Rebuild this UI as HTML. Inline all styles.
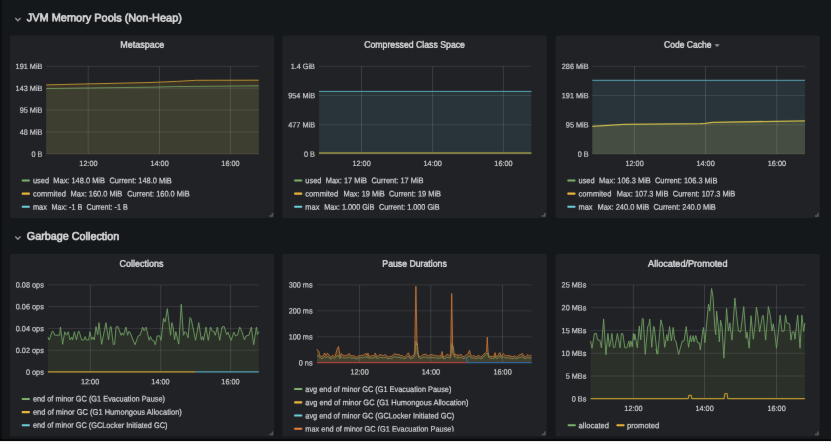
<!DOCTYPE html>
<html lang="en"><head><meta charset="utf-8"><title>JVM dashboard</title>
<style>
html,body{margin:0;padding:0;background:#15181a;width:831px;height:442px;overflow:hidden}
svg{display:block;position:absolute;left:-4px;top:-4px;filter:url(#soft)}
text{font-family:"Liberation Sans",Arial,sans-serif;white-space:pre}
</style></head><body>
<svg width="839" height="450" viewBox="-4 -4 839 450" font-family="'Liberation Sans', Arial, sans-serif">
<defs><filter id="soft" x="0" y="0" width="1" height="1" color-interpolation-filters="sRGB"><feConvolveMatrix order="3" kernelMatrix="0.00163 0.03713 0.00163 0.03713 0.84497 0.03713 0.00163 0.03713 0.00163" divisor="1" edgeMode="duplicate" preserveAlpha="true"/></filter><linearGradient id="lg" x1="0" x2="1" y1="0" y2="0"><stop offset="0" stop-color="#0c0d0e"/><stop offset="0.6" stop-color="#101113"/><stop offset="1" stop-color="#15181a"/></linearGradient></defs>
<rect x="-4" y="-4" width="839" height="450" fill="#15181a"/>
<rect x="-4" y="-4" width="4.1" height="450" fill="#0c0d0e"/>
<rect x="0" y="-4" width="3.2" height="450" fill="url(#lg)"/>
<polyline points="15.3,18.00 17.9,20.70 20.5,18.00" fill="none" stroke="#97989a" stroke-width="1.3"/>
<text transform="translate(26.80,21.35) rotate(0.03) scale(0.9873,1)" font-size="11.1" text-anchor="start" fill="#d8d9da" font-weight="400" stroke="#d8d9da" stroke-width="0.65">JVM Memory Pools (Non-Heap)</text>
<polyline points="15.3,236.50 17.9,239.20 20.5,236.50" fill="none" stroke="#97989a" stroke-width="1.3"/>
<text transform="translate(26.80,239.85) rotate(0.03) scale(0.9745,1)" font-size="11.1" text-anchor="start" fill="#d8d9da" font-weight="400" stroke="#d8d9da" stroke-width="0.65">Garbage Collection</text>
<rect x="10.00" y="35.60" width="264.3" height="182.5" rx="1.6" fill="#212226"/>
<path d="M269.40,216.10 H272.40 V213.10" fill="none" stroke="#5a5b5f" stroke-width="1.5"/>
<text transform="translate(142.15,47.70) rotate(0.03) scale(0.9468,1)" font-size="9.5" text-anchor="middle" fill="#d8d9da" font-weight="400" stroke="#d8d9da" stroke-width="0.45">Metaspace</text>
<polygon points="46.20,84.90 88.00,83.90 150.00,82.50 176.50,81.40 196.30,80.30 258.80,80.20 258.80,154.00 46.20,154.00" fill="#3a3426" opacity="1.0"/>
<polygon points="46.20,88.60 110.00,87.70 150.00,87.20 173.80,86.60 258.80,85.80 258.80,154.00 46.20,154.00" fill="#3d3e2f" opacity="1.0"/>
<line x1="46.20" x2="258.80" y1="66.30" y2="66.30" stroke="#fff" stroke-opacity="0.125" stroke-width="0.8"/>
<line x1="46.20" x2="258.80" y1="88.22" y2="88.22" stroke="#fff" stroke-opacity="0.125" stroke-width="0.8"/>
<line x1="46.20" x2="258.80" y1="110.15" y2="110.15" stroke="#fff" stroke-opacity="0.125" stroke-width="0.8"/>
<line x1="46.20" x2="258.80" y1="132.07" y2="132.07" stroke="#fff" stroke-opacity="0.125" stroke-width="0.8"/>
<line x1="46.20" x2="258.80" y1="154.00" y2="154.00" stroke="#fff" stroke-opacity="0.125" stroke-width="0.8"/>
<line x1="88.20" x2="88.20" y1="66.30" y2="154.00" stroke="#fff" stroke-opacity="0.155" stroke-width="0.8"/>
<line x1="159.50" x2="159.50" y1="66.30" y2="154.00" stroke="#fff" stroke-opacity="0.155" stroke-width="0.8"/>
<line x1="230.40" x2="230.40" y1="66.30" y2="154.00" stroke="#fff" stroke-opacity="0.155" stroke-width="0.8"/>
<polyline points="46.20,84.90 88.00,83.90 150.00,82.50 176.50,81.40 196.30,80.30 258.80,80.20" fill="none" stroke="#c69a31" stroke-width="0.9" stroke-linejoin="round" stroke-linecap="butt" opacity="1.0"/>
<polyline points="46.20,88.60 110.00,87.70 150.00,87.20 173.80,86.60 258.80,85.80" fill="none" stroke="#739961" stroke-width="0.9" stroke-linejoin="round" stroke-linecap="butt" opacity="1.0"/>
<text transform="translate(42.40,69.00) rotate(0.03) scale(0.95,1)" font-size="7.7" text-anchor="end" fill="#d2d3d4" font-weight="400" stroke="#d2d3d4" stroke-width="0.18">191 MiB</text>
<text transform="translate(42.40,90.92) rotate(0.03) scale(0.95,1)" font-size="7.7" text-anchor="end" fill="#d2d3d4" font-weight="400" stroke="#d2d3d4" stroke-width="0.18">143 MiB</text>
<text transform="translate(42.40,112.85) rotate(0.03) scale(0.95,1)" font-size="7.7" text-anchor="end" fill="#d2d3d4" font-weight="400" stroke="#d2d3d4" stroke-width="0.18">95 MiB</text>
<text transform="translate(42.40,134.77) rotate(0.03) scale(0.95,1)" font-size="7.7" text-anchor="end" fill="#d2d3d4" font-weight="400" stroke="#d2d3d4" stroke-width="0.18">48 MiB</text>
<text transform="translate(42.40,156.70) rotate(0.03) scale(0.95,1)" font-size="7.7" text-anchor="end" fill="#d2d3d4" font-weight="400" stroke="#d2d3d4" stroke-width="0.18">0 B</text>
<text transform="translate(88.50,166.00) rotate(0.03) scale(0.95,1)" font-size="7.7" text-anchor="middle" fill="#d2d3d4" font-weight="400" stroke="#d2d3d4" stroke-width="0.18">12:00</text>
<text transform="translate(159.60,166.00) rotate(0.03) scale(0.95,1)" font-size="7.7" text-anchor="middle" fill="#d2d3d4" font-weight="400" stroke="#d2d3d4" stroke-width="0.18">14:00</text>
<text transform="translate(230.50,166.00) rotate(0.03) scale(0.95,1)" font-size="7.7" text-anchor="middle" fill="#d2d3d4" font-weight="400" stroke="#d2d3d4" stroke-width="0.18">16:00</text>
<rect x="21.70" y="179.40" width="8.2" height="2.1" rx="0.7" fill="#7eb26d"/>
<text transform="translate(32.90,183.35) rotate(0.03) scale(0.92,1)" font-size="8.1" text-anchor="start" fill="#d3d4d6" font-weight="400" stroke="#d3d4d6" stroke-width="0.22">used</text>
<text transform="translate(53.30,183.35) rotate(0.03) scale(0.92,1)" font-size="8.1" text-anchor="start" fill="#d3d4d6" font-weight="400" stroke="#d3d4d6" stroke-width="0.22">Max: 148.0 MiB</text>
<text transform="translate(109.40,183.35) rotate(0.03) scale(0.92,1)" font-size="8.1" text-anchor="start" fill="#d3d4d6" font-weight="400" stroke="#d3d4d6" stroke-width="0.22">Current: 148.0 MiB</text>
<rect x="21.70" y="192.60" width="8.2" height="2.1" rx="0.7" fill="#eab839"/>
<text transform="translate(32.90,196.55) rotate(0.03) scale(0.9399,1)" font-size="8.1" text-anchor="start" fill="#d3d4d6" font-weight="400" stroke="#d3d4d6" stroke-width="0.22">commited</text>
<text transform="translate(70.60,196.55) rotate(0.03) scale(0.92,1)" font-size="8.1" text-anchor="start" fill="#d3d4d6" font-weight="400" stroke="#d3d4d6" stroke-width="0.22">Max: 160.0 MiB</text>
<text transform="translate(127.20,196.55) rotate(0.03) scale(0.92,1)" font-size="8.1" text-anchor="start" fill="#d3d4d6" font-weight="400" stroke="#d3d4d6" stroke-width="0.22">Current: 160.0 MiB</text>
<rect x="21.70" y="205.70" width="8.2" height="2.1" rx="0.7" fill="#6ed0e0"/>
<text transform="translate(32.90,209.65) rotate(0.03) scale(0.92,1)" font-size="8.1" text-anchor="start" fill="#d3d4d6" font-weight="400" stroke="#d3d4d6" stroke-width="0.22">max</text>
<text transform="translate(51.40,209.65) rotate(0.03) scale(0.89,1)" font-size="8.1" text-anchor="start" fill="#d3d4d6" font-weight="400" stroke="#d3d4d6" stroke-width="0.22">Max: -1 B</text>
<text transform="translate(86.50,209.65) rotate(0.03) scale(0.89,1)" font-size="8.1" text-anchor="start" fill="#d3d4d6" font-weight="400" stroke="#d3d4d6" stroke-width="0.22">Current: -1 B</text>
<rect x="282.40" y="35.60" width="264.3" height="182.5" rx="1.6" fill="#212226"/>
<path d="M541.80,216.10 H544.80 V213.10" fill="none" stroke="#5a5b5f" stroke-width="1.5"/>
<text transform="translate(414.55,47.70) rotate(0.03) scale(0.9196,1)" font-size="9.5" text-anchor="middle" fill="#d8d9da" font-weight="400" stroke="#d8d9da" stroke-width="0.45">Compressed Class Space</text>
<polygon points="319.00,91.40 531.40,91.40 531.40,154.00 319.00,154.00" fill="#28343a" opacity="1.0"/>
<line x1="319.00" x2="531.40" y1="66.30" y2="66.30" stroke="#fff" stroke-opacity="0.125" stroke-width="0.8"/>
<line x1="319.00" x2="531.40" y1="95.53" y2="95.53" stroke="#fff" stroke-opacity="0.125" stroke-width="0.8"/>
<line x1="319.00" x2="531.40" y1="124.77" y2="124.77" stroke="#fff" stroke-opacity="0.125" stroke-width="0.8"/>
<line x1="319.00" x2="531.40" y1="154.00" y2="154.00" stroke="#fff" stroke-opacity="0.125" stroke-width="0.8"/>
<line x1="361.50" x2="361.50" y1="66.30" y2="154.00" stroke="#fff" stroke-opacity="0.155" stroke-width="0.8"/>
<line x1="432.60" x2="432.60" y1="66.30" y2="154.00" stroke="#fff" stroke-opacity="0.155" stroke-width="0.8"/>
<line x1="503.40" x2="503.40" y1="66.30" y2="154.00" stroke="#fff" stroke-opacity="0.155" stroke-width="0.8"/>
<polyline points="319.00,91.40 531.40,91.40" fill="none" stroke="#58a8b7" stroke-width="1.0" stroke-linejoin="round" stroke-linecap="butt" opacity="1.0"/>
<polyline points="319.00,153.00 531.40,153.00" fill="none" stroke="#9c9345" stroke-width="1.4" stroke-linejoin="round" stroke-linecap="butt" opacity="1.0"/>
<text transform="translate(315.00,69.00) rotate(0.03) scale(0.95,1)" font-size="7.7" text-anchor="end" fill="#d2d3d4" font-weight="400" stroke="#d2d3d4" stroke-width="0.18">1.4 GiB</text>
<text transform="translate(315.00,98.23) rotate(0.03) scale(0.95,1)" font-size="7.7" text-anchor="end" fill="#d2d3d4" font-weight="400" stroke="#d2d3d4" stroke-width="0.18">954 MiB</text>
<text transform="translate(315.00,127.47) rotate(0.03) scale(0.95,1)" font-size="7.7" text-anchor="end" fill="#d2d3d4" font-weight="400" stroke="#d2d3d4" stroke-width="0.18">477 MiB</text>
<text transform="translate(315.00,156.70) rotate(0.03) scale(0.95,1)" font-size="7.7" text-anchor="end" fill="#d2d3d4" font-weight="400" stroke="#d2d3d4" stroke-width="0.18">0 B</text>
<text transform="translate(361.60,166.00) rotate(0.03) scale(0.95,1)" font-size="7.7" text-anchor="middle" fill="#d2d3d4" font-weight="400" stroke="#d2d3d4" stroke-width="0.18">12:00</text>
<text transform="translate(432.70,166.00) rotate(0.03) scale(0.95,1)" font-size="7.7" text-anchor="middle" fill="#d2d3d4" font-weight="400" stroke="#d2d3d4" stroke-width="0.18">14:00</text>
<text transform="translate(503.50,166.00) rotate(0.03) scale(0.95,1)" font-size="7.7" text-anchor="middle" fill="#d2d3d4" font-weight="400" stroke="#d2d3d4" stroke-width="0.18">16:00</text>
<rect x="294.10" y="179.40" width="8.2" height="2.1" rx="0.7" fill="#7eb26d"/>
<text transform="translate(305.30,183.35) rotate(0.03) scale(0.92,1)" font-size="8.1" text-anchor="start" fill="#d3d4d6" font-weight="400" stroke="#d3d4d6" stroke-width="0.22">used</text>
<text transform="translate(325.70,183.35) rotate(0.03) scale(0.92,1)" font-size="8.1" text-anchor="start" fill="#d3d4d6" font-weight="400" stroke="#d3d4d6" stroke-width="0.22">Max: 17 MiB</text>
<text transform="translate(371.50,183.35) rotate(0.03) scale(0.92,1)" font-size="8.1" text-anchor="start" fill="#d3d4d6" font-weight="400" stroke="#d3d4d6" stroke-width="0.22">Current: 17 MiB</text>
<rect x="294.10" y="192.60" width="8.2" height="2.1" rx="0.7" fill="#eab839"/>
<text transform="translate(305.30,196.55) rotate(0.03) scale(0.9399,1)" font-size="8.1" text-anchor="start" fill="#d3d4d6" font-weight="400" stroke="#d3d4d6" stroke-width="0.22">commited</text>
<text transform="translate(343.50,196.55) rotate(0.03) scale(0.92,1)" font-size="8.1" text-anchor="start" fill="#d3d4d6" font-weight="400" stroke="#d3d4d6" stroke-width="0.22">Max: 19 MiB</text>
<text transform="translate(389.00,196.55) rotate(0.03) scale(0.92,1)" font-size="8.1" text-anchor="start" fill="#d3d4d6" font-weight="400" stroke="#d3d4d6" stroke-width="0.22">Current: 19 MiB</text>
<rect x="294.10" y="205.70" width="8.2" height="2.1" rx="0.7" fill="#6ed0e0"/>
<text transform="translate(305.30,209.65) rotate(0.03) scale(0.92,1)" font-size="8.1" text-anchor="start" fill="#d3d4d6" font-weight="400" stroke="#d3d4d6" stroke-width="0.22">max</text>
<text transform="translate(324.20,209.65) rotate(0.03) scale(0.9,1)" font-size="8.1" text-anchor="start" fill="#d3d4d6" font-weight="400" stroke="#d3d4d6" stroke-width="0.22">Max: 1.000 GiB</text>
<text transform="translate(378.90,209.65) rotate(0.03) scale(0.9,1)" font-size="8.1" text-anchor="start" fill="#d3d4d6" font-weight="400" stroke="#d3d4d6" stroke-width="0.22">Current: 1.000 GiB</text>
<rect x="555.60" y="35.60" width="264.3" height="182.5" rx="1.6" fill="#212226"/>
<path d="M815.00,216.10 H818.00 V213.10" fill="none" stroke="#5a5b5f" stroke-width="1.5"/>
<text transform="translate(687.75,47.70) rotate(0.03) scale(0.8975,1)" font-size="9.5" text-anchor="middle" fill="#d8d9da" font-weight="400" stroke="#d8d9da" stroke-width="0.45">Code Cache</text>
<path d="M714.50,44.3 h5.2 l-2.6,2.7 z" fill="#9a9b9d"/>
<polygon points="592.30,80.30 805.00,80.30 805.00,154.00 592.30,154.00" fill="#28343a" opacity="1.0"/>
<polygon points="592.30,126.40 623.70,124.40 700.00,123.60 705.20,123.30 712.30,122.30 805.00,120.90 805.00,154.00 592.30,154.00" fill="#444d3f" opacity="1.0"/>
<line x1="592.30" x2="805.00" y1="66.30" y2="66.30" stroke="#fff" stroke-opacity="0.125" stroke-width="0.8"/>
<line x1="592.30" x2="805.00" y1="95.53" y2="95.53" stroke="#fff" stroke-opacity="0.125" stroke-width="0.8"/>
<line x1="592.30" x2="805.00" y1="124.77" y2="124.77" stroke="#fff" stroke-opacity="0.125" stroke-width="0.8"/>
<line x1="592.30" x2="805.00" y1="154.00" y2="154.00" stroke="#fff" stroke-opacity="0.125" stroke-width="0.8"/>
<line x1="634.50" x2="634.50" y1="66.30" y2="154.00" stroke="#fff" stroke-opacity="0.155" stroke-width="0.8"/>
<line x1="705.50" x2="705.50" y1="66.30" y2="154.00" stroke="#fff" stroke-opacity="0.155" stroke-width="0.8"/>
<line x1="776.80" x2="776.80" y1="66.30" y2="154.00" stroke="#fff" stroke-opacity="0.155" stroke-width="0.8"/>
<polyline points="592.30,80.30 805.00,80.30" fill="none" stroke="#58a8b7" stroke-width="1.0" stroke-linejoin="round" stroke-linecap="butt" opacity="1.0"/>
<polyline points="592.30,126.40 623.70,124.40 700.00,123.60 705.20,123.30 712.30,122.30 805.00,120.90" fill="none" stroke="#c9b748" stroke-width="1.3" stroke-linejoin="round" stroke-linecap="butt" opacity="1.0"/>
<text transform="translate(588.60,69.00) rotate(0.03) scale(0.95,1)" font-size="7.7" text-anchor="end" fill="#d2d3d4" font-weight="400" stroke="#d2d3d4" stroke-width="0.18">286 MiB</text>
<text transform="translate(588.60,98.23) rotate(0.03) scale(0.95,1)" font-size="7.7" text-anchor="end" fill="#d2d3d4" font-weight="400" stroke="#d2d3d4" stroke-width="0.18">191 MiB</text>
<text transform="translate(588.60,127.47) rotate(0.03) scale(0.95,1)" font-size="7.7" text-anchor="end" fill="#d2d3d4" font-weight="400" stroke="#d2d3d4" stroke-width="0.18">95 MiB</text>
<text transform="translate(588.60,156.70) rotate(0.03) scale(0.95,1)" font-size="7.7" text-anchor="end" fill="#d2d3d4" font-weight="400" stroke="#d2d3d4" stroke-width="0.18">0 B</text>
<text transform="translate(634.60,166.00) rotate(0.03) scale(0.95,1)" font-size="7.7" text-anchor="middle" fill="#d2d3d4" font-weight="400" stroke="#d2d3d4" stroke-width="0.18">12:00</text>
<text transform="translate(705.60,166.00) rotate(0.03) scale(0.95,1)" font-size="7.7" text-anchor="middle" fill="#d2d3d4" font-weight="400" stroke="#d2d3d4" stroke-width="0.18">14:00</text>
<text transform="translate(776.90,166.00) rotate(0.03) scale(0.95,1)" font-size="7.7" text-anchor="middle" fill="#d2d3d4" font-weight="400" stroke="#d2d3d4" stroke-width="0.18">16:00</text>
<rect x="567.30" y="179.40" width="8.2" height="2.1" rx="0.7" fill="#7eb26d"/>
<text transform="translate(578.50,183.35) rotate(0.03) scale(0.92,1)" font-size="8.1" text-anchor="start" fill="#d3d4d6" font-weight="400" stroke="#d3d4d6" stroke-width="0.22">used</text>
<text transform="translate(599.10,183.35) rotate(0.03) scale(0.92,1)" font-size="8.1" text-anchor="start" fill="#d3d4d6" font-weight="400" stroke="#d3d4d6" stroke-width="0.22">Max: 106.3 MiB</text>
<text transform="translate(655.00,183.35) rotate(0.03) scale(0.92,1)" font-size="8.1" text-anchor="start" fill="#d3d4d6" font-weight="400" stroke="#d3d4d6" stroke-width="0.22">Current: 106.3 MiB</text>
<rect x="567.30" y="192.60" width="8.2" height="2.1" rx="0.7" fill="#eab839"/>
<text transform="translate(578.50,196.55) rotate(0.03) scale(0.9399,1)" font-size="8.1" text-anchor="start" fill="#d3d4d6" font-weight="400" stroke="#d3d4d6" stroke-width="0.22">commited</text>
<text transform="translate(616.70,196.55) rotate(0.03) scale(0.92,1)" font-size="8.1" text-anchor="start" fill="#d3d4d6" font-weight="400" stroke="#d3d4d6" stroke-width="0.22">Max: 107.3 MiB</text>
<text transform="translate(672.80,196.55) rotate(0.03) scale(0.92,1)" font-size="8.1" text-anchor="start" fill="#d3d4d6" font-weight="400" stroke="#d3d4d6" stroke-width="0.22">Current: 107.3 MiB</text>
<rect x="567.30" y="205.70" width="8.2" height="2.1" rx="0.7" fill="#6ed0e0"/>
<text transform="translate(578.50,209.65) rotate(0.03) scale(0.92,1)" font-size="8.1" text-anchor="start" fill="#d3d4d6" font-weight="400" stroke="#d3d4d6" stroke-width="0.22">max</text>
<text transform="translate(597.50,209.65) rotate(0.03) scale(0.92,1)" font-size="8.1" text-anchor="start" fill="#d3d4d6" font-weight="400" stroke="#d3d4d6" stroke-width="0.22">Max: 240.0 MiB</text>
<text transform="translate(653.40,209.65) rotate(0.03) scale(0.92,1)" font-size="8.1" text-anchor="start" fill="#d3d4d6" font-weight="400" stroke="#d3d4d6" stroke-width="0.22">Current: 240.0 MiB</text>
<rect x="10.00" y="254.10" width="264.3" height="182.5" rx="1.6" fill="#212226"/>
<path d="M269.40,434.60 H272.40 V431.60" fill="none" stroke="#5a5b5f" stroke-width="1.5"/>
<text transform="translate(141.55,266.75) rotate(0.03) scale(0.9469,1)" font-size="9.5" text-anchor="middle" fill="#d8d9da" font-weight="400" stroke="#d8d9da" stroke-width="0.45">Collections</text>
<polygon points="47.90,336.96 49.20,340.00 52.23,331.33 53.10,331.33 54.83,335.23 59.60,335.23 60.46,327.00 62.63,344.33 64.80,331.76 66.53,335.23 68.26,331.76 70.00,340.00 71.73,336.96 72.60,340.00 74.33,331.76 76.50,340.00 78.23,331.33 79.10,331.33 81.69,340.00 83.86,340.00 85.16,336.53 86.46,340.00 88.63,340.00 89.93,331.76 91.66,339.56 92.96,336.96 94.26,340.00 95.99,326.56 97.73,334.80 99.03,322.67 101.63,344.33 105.96,322.67 108.56,340.00 110.29,326.56 111.16,327.00 113.32,344.76 114.62,344.33 116.00,327.05 117.90,326.42 121.07,335.29 122.34,332.76 123.60,335.29 125.89,327.05 127.66,335.29 128.67,331.49 129.94,332.12 135.01,344.80 138.18,335.92 140.08,335.29 142.62,327.05 144.14,330.85 146.04,327.05 149.21,340.36 150.47,336.56 152.12,340.36 153.64,340.36 155.29,344.80 157.19,335.92 159.73,335.92 160.99,340.36 163.53,318.18 165.18,321.98 167.33,308.67 170.50,335.29 171.77,322.62 173.03,326.42 174.56,339.73 175.82,331.49 178.74,344.16 181.27,304.24 183.43,335.29 185.07,331.49 186.34,332.76 188.00,337.83 189.90,317.55 191.17,318.81 195.60,340.36 198.77,322.62 201.31,339.73 202.58,336.56 203.46,340.36 206.00,327.05 208.28,340.36 210.56,327.05 212.08,330.85 213.98,331.49 215.25,335.29 217.40,327.05 219.69,340.36 221.97,327.05 224.12,326.42 226.66,334.66 227.92,332.12 231.09,340.36 233.88,332.12 235.53,335.92 237.43,335.29 239.71,327.05 241.87,331.49 244.40,339.73 246.05,335.92 248.84,335.29 251.37,327.05 253.65,344.80 256.44,327.05 257.46,334.66 258.80,331.49 258.80,372.00 47.90,372.00" fill="#2b3029" opacity="1.0"/>
<line x1="47.90" x2="258.80" y1="284.90" y2="284.90" stroke="#fff" stroke-opacity="0.125" stroke-width="0.8"/>
<line x1="47.90" x2="258.80" y1="306.67" y2="306.67" stroke="#fff" stroke-opacity="0.125" stroke-width="0.8"/>
<line x1="47.90" x2="258.80" y1="328.45" y2="328.45" stroke="#fff" stroke-opacity="0.125" stroke-width="0.8"/>
<line x1="47.90" x2="258.80" y1="350.23" y2="350.23" stroke="#fff" stroke-opacity="0.125" stroke-width="0.8"/>
<line x1="47.90" x2="258.80" y1="372.00" y2="372.00" stroke="#fff" stroke-opacity="0.125" stroke-width="0.8"/>
<line x1="90.30" x2="90.30" y1="284.90" y2="372.00" stroke="#fff" stroke-opacity="0.155" stroke-width="0.8"/>
<line x1="160.70" x2="160.70" y1="284.90" y2="372.00" stroke="#fff" stroke-opacity="0.155" stroke-width="0.8"/>
<line x1="230.60" x2="230.60" y1="284.90" y2="372.00" stroke="#fff" stroke-opacity="0.155" stroke-width="0.8"/>
<polyline points="47.90,336.96 49.20,340.00 52.23,331.33 53.10,331.33 54.83,335.23 59.60,335.23 60.46,327.00 62.63,344.33 64.80,331.76 66.53,335.23 68.26,331.76 70.00,340.00 71.73,336.96 72.60,340.00 74.33,331.76 76.50,340.00 78.23,331.33 79.10,331.33 81.69,340.00 83.86,340.00 85.16,336.53 86.46,340.00 88.63,340.00 89.93,331.76 91.66,339.56 92.96,336.96 94.26,340.00 95.99,326.56 97.73,334.80 99.03,322.67 101.63,344.33 105.96,322.67 108.56,340.00 110.29,326.56 111.16,327.00 113.32,344.76 114.62,344.33 116.00,327.05 117.90,326.42 121.07,335.29 122.34,332.76 123.60,335.29 125.89,327.05 127.66,335.29 128.67,331.49 129.94,332.12 135.01,344.80 138.18,335.92 140.08,335.29 142.62,327.05 144.14,330.85 146.04,327.05 149.21,340.36 150.47,336.56 152.12,340.36 153.64,340.36 155.29,344.80 157.19,335.92 159.73,335.92 160.99,340.36 163.53,318.18 165.18,321.98 167.33,308.67 170.50,335.29 171.77,322.62 173.03,326.42 174.56,339.73 175.82,331.49 178.74,344.16 181.27,304.24 183.43,335.29 185.07,331.49 186.34,332.76 188.00,337.83 189.90,317.55 191.17,318.81 195.60,340.36 198.77,322.62 201.31,339.73 202.58,336.56 203.46,340.36 206.00,327.05 208.28,340.36 210.56,327.05 212.08,330.85 213.98,331.49 215.25,335.29 217.40,327.05 219.69,340.36 221.97,327.05 224.12,326.42 226.66,334.66 227.92,332.12 231.09,340.36 233.88,332.12 235.53,335.92 237.43,335.29 239.71,327.05 241.87,331.49 244.40,339.73 246.05,335.92 248.84,335.29 251.37,327.05 253.65,344.80 256.44,327.05 257.46,334.66 258.80,331.49" fill="none" stroke="#72a163" stroke-width="0.9" stroke-linejoin="round" stroke-linecap="butt" opacity="1.0"/>
<polyline points="47.90,371.90 195.40,371.90" fill="none" stroke="#c59a30" stroke-width="1.3" stroke-linejoin="round" stroke-linecap="butt" opacity="1.0"/>
<polyline points="195.20,371.90 258.80,371.90" fill="none" stroke="#4f9fb3" stroke-width="1.3" stroke-linejoin="round" stroke-linecap="butt" opacity="1.0"/>
<text transform="translate(43.80,287.60) rotate(0.03) scale(0.95,1)" font-size="7.7" text-anchor="end" fill="#d2d3d4" font-weight="400" stroke="#d2d3d4" stroke-width="0.18">0.08 ops</text>
<text transform="translate(43.80,309.37) rotate(0.03) scale(0.95,1)" font-size="7.7" text-anchor="end" fill="#d2d3d4" font-weight="400" stroke="#d2d3d4" stroke-width="0.18">0.06 ops</text>
<text transform="translate(43.80,331.15) rotate(0.03) scale(0.95,1)" font-size="7.7" text-anchor="end" fill="#d2d3d4" font-weight="400" stroke="#d2d3d4" stroke-width="0.18">0.04 ops</text>
<text transform="translate(43.80,352.93) rotate(0.03) scale(0.95,1)" font-size="7.7" text-anchor="end" fill="#d2d3d4" font-weight="400" stroke="#d2d3d4" stroke-width="0.18">0.02 ops</text>
<text transform="translate(43.80,374.70) rotate(0.03) scale(0.95,1)" font-size="7.7" text-anchor="end" fill="#d2d3d4" font-weight="400" stroke="#d2d3d4" stroke-width="0.18">0 ops</text>
<text transform="translate(90.10,384.30) rotate(0.03) scale(0.95,1)" font-size="7.7" text-anchor="middle" fill="#d2d3d4" font-weight="400" stroke="#d2d3d4" stroke-width="0.18">12:00</text>
<text transform="translate(160.50,384.30) rotate(0.03) scale(0.95,1)" font-size="7.7" text-anchor="middle" fill="#d2d3d4" font-weight="400" stroke="#d2d3d4" stroke-width="0.18">14:00</text>
<text transform="translate(230.50,384.30) rotate(0.03) scale(0.95,1)" font-size="7.7" text-anchor="middle" fill="#d2d3d4" font-weight="400" stroke="#d2d3d4" stroke-width="0.18">16:00</text>
<rect x="21.70" y="397.90" width="8.2" height="2.1" rx="0.7" fill="#7eb26d"/>
<text transform="translate(32.90,401.55) rotate(0.03) scale(0.9091,1)" font-size="8.1" text-anchor="start" fill="#d3d4d6" font-weight="400" stroke="#d3d4d6" stroke-width="0.22">end of minor GC (G1 Evacuation Pause)</text>
<rect x="21.70" y="411.10" width="8.2" height="2.1" rx="0.7" fill="#eab839"/>
<text transform="translate(32.90,414.75) rotate(0.03) scale(0.9289,1)" font-size="8.1" text-anchor="start" fill="#d3d4d6" font-weight="400" stroke="#d3d4d6" stroke-width="0.22">end of minor GC (G1 Humongous Allocation)</text>
<rect x="21.70" y="424.20" width="8.2" height="2.1" rx="0.7" fill="#6ed0e0"/>
<text transform="translate(32.90,427.85) rotate(0.03) scale(0.9074,1)" font-size="8.1" text-anchor="start" fill="#d3d4d6" font-weight="400" stroke="#d3d4d6" stroke-width="0.22">end of minor GC (GCLocker Initiated GC)</text>
<rect x="282.40" y="254.10" width="264.3" height="182.5" rx="1.6" fill="#212226"/>
<path d="M541.80,434.60 H544.80 V431.60" fill="none" stroke="#5a5b5f" stroke-width="1.5"/>
<text transform="translate(414.55,266.75) rotate(0.03) scale(0.9183,1)" font-size="9.5" text-anchor="middle" fill="#d8d9da" font-weight="400" stroke="#d8d9da" stroke-width="0.45">Pause Durations</text>
<polygon points="317.00,349.06 317.90,350.80 318.77,351.23 319.63,355.13 320.93,356.00 322.23,356.86 323.53,355.13 324.57,352.96 325.70,355.56 327.00,353.40 327.86,353.40 329.16,355.13 330.46,357.73 332.20,355.56 333.06,355.13 334.36,356.86 335.23,356.00 336.96,349.50 338.52,346.46 340.00,356.86 341.30,353.40 342.60,355.56 343.90,355.13 345.20,356.00 346.50,354.70 347.80,355.56 349.10,353.40 350.40,355.56 352.13,356.00 353.86,355.56 355.59,356.86 357.33,357.30 358.63,355.56 359.93,356.00 361.66,355.13 362.96,355.56 364.69,354.26 365.99,353.40 366.86,355.56 367.90,352.96 369.03,356.43 371.19,356.00 372.93,355.56 374.23,355.56 375.35,352.96 376.56,356.43 378.56,356.00 379.86,354.26 381.59,355.13 383.32,355.56 385.49,354.70 386.00,354.96 387.73,357.13 389.47,356.70 391.20,356.26 392.93,355.40 394.23,353.66 395.53,354.10 397.27,354.53 399.00,354.53 400.73,355.83 402.46,355.40 404.20,357.13 406.36,355.40 408.36,352.80 410.26,357.13 412.00,356.26 413.73,354.96 414.68,352.80 415.90,286.25 417.20,352.80 418.93,356.26 420.66,356.70 422.40,354.96 424.13,354.53 425.86,354.10 427.16,355.83 428.89,355.83 430.63,354.53 432.79,354.96 434.53,355.40 436.26,355.40 437.99,356.26 439.73,355.83 441.03,355.40 442.15,351.50 443.19,357.13 444.93,356.70 446.66,354.53 448.39,354.53 450.12,356.26 450.64,353.66 451.68,293.53 452.81,353.23 454.46,355.40 455.32,353.66 456.62,355.40 457.84,354.53 458.00,356.25 459.83,354.87 461.20,354.42 462.57,356.70 464.40,356.25 466.23,354.87 468.06,353.96 469.44,350.30 470.81,355.33 472.64,356.25 473.55,355.33 475.38,356.70 477.21,356.25 479.04,355.33 480.87,357.16 483.16,354.87 485.45,352.59 486.55,351.67 487.28,337.03 488.01,351.67 489.11,356.25 490.94,356.70 493.22,356.25 494.14,356.25 495.05,352.59 495.97,356.25 497.80,356.25 499.17,353.04 500.09,352.59 501.00,356.25 503.29,353.50 504.66,354.87 506.03,356.25 507.41,355.33 509.24,355.79 511.06,356.25 512.89,356.70 514.72,355.79 516.55,357.16 518.38,355.33 520.21,354.87 522.50,353.50 523.87,356.25 525.70,356.70 527.99,354.42 529.82,356.25 531.50,355.33 531.50,362.70 317.00,362.70" fill="#463b2b" opacity="1.0"/>
<polygon points="317.00,355.70 317.90,355.70 318.77,355.70 319.63,357.61 320.93,358.11 322.23,358.61 323.53,357.61 324.57,356.35 325.70,357.86 327.00,356.60 327.86,356.60 329.16,357.61 330.46,359.12 332.20,357.86 333.06,357.61 334.36,358.61 335.23,358.11 336.96,355.70 338.52,355.70 340.00,358.61 341.30,356.60 342.60,357.86 343.90,357.61 345.20,358.11 346.50,357.36 347.80,357.86 349.10,356.60 350.40,357.86 352.13,358.11 353.86,357.86 355.59,358.61 357.33,358.87 358.63,357.86 359.93,358.11 361.66,357.61 362.96,357.86 364.69,357.11 365.99,356.60 366.86,357.86 367.90,356.35 369.03,358.36 371.19,358.11 372.93,357.86 374.23,357.86 375.35,356.35 376.56,358.36 378.56,358.11 379.86,357.11 381.59,357.61 383.32,357.86 385.49,357.36 386.00,357.51 387.73,358.77 389.47,358.52 391.20,358.27 392.93,357.76 394.23,356.76 395.53,357.01 397.27,357.26 399.00,357.26 400.73,358.02 402.46,357.76 404.20,358.77 406.36,357.76 408.36,356.26 410.26,358.77 412.00,358.27 413.73,357.51 414.90,355.00 415.90,341.10 416.60,344.80 417.40,343.60 418.60,357.20 420.66,358.52 422.40,357.51 424.13,357.26 425.86,357.01 427.16,358.02 428.89,358.02 430.63,357.26 432.79,357.51 434.53,357.76 436.26,357.76 437.99,358.27 439.73,358.02 441.03,357.76 442.15,355.70 443.19,358.77 444.93,358.52 446.66,357.26 448.39,357.26 450.12,358.27 450.90,355.50 451.90,343.30 452.70,347.50 453.40,346.60 454.40,357.00 455.32,356.76 456.62,357.76 457.84,357.26 458.00,358.26 459.83,357.46 461.20,357.19 462.57,358.52 464.40,358.26 466.23,357.46 468.06,356.93 469.44,355.70 470.81,357.73 472.64,358.26 473.55,357.73 475.38,358.52 477.21,358.26 479.04,357.73 480.87,358.79 483.16,357.46 485.60,354.80 487.30,352.90 488.80,357.30 490.94,358.52 493.22,358.26 494.14,358.26 495.05,356.13 495.97,358.26 497.80,358.26 499.17,356.40 500.09,356.13 501.00,358.26 503.29,356.66 504.66,357.46 506.03,358.26 507.41,357.73 509.24,357.99 511.06,358.26 512.89,358.52 514.72,357.99 516.55,358.79 518.38,357.73 520.21,357.46 522.50,356.66 523.87,358.26 525.70,358.52 527.99,357.19 529.82,358.26 531.50,357.73 531.50,362.70 317.00,362.70" fill="#443f2d" opacity="1.0"/>
<line x1="317.00" x2="531.50" y1="284.90" y2="284.90" stroke="#fff" stroke-opacity="0.125" stroke-width="0.8"/>
<line x1="317.00" x2="531.50" y1="310.83" y2="310.83" stroke="#fff" stroke-opacity="0.125" stroke-width="0.8"/>
<line x1="317.00" x2="531.50" y1="336.77" y2="336.77" stroke="#fff" stroke-opacity="0.125" stroke-width="0.8"/>
<line x1="317.00" x2="531.50" y1="362.70" y2="362.70" stroke="#fff" stroke-opacity="0.125" stroke-width="0.8"/>
<line x1="359.40" x2="359.40" y1="284.90" y2="362.70" stroke="#fff" stroke-opacity="0.155" stroke-width="0.8"/>
<line x1="430.80" x2="430.80" y1="284.90" y2="362.70" stroke="#fff" stroke-opacity="0.155" stroke-width="0.8"/>
<line x1="502.50" x2="502.50" y1="284.90" y2="362.70" stroke="#fff" stroke-opacity="0.155" stroke-width="0.8"/>
<polyline points="317.00,355.70 317.90,355.70 318.77,355.70 319.63,357.61 320.93,358.11 322.23,358.61 323.53,357.61 324.57,356.35 325.70,357.86 327.00,356.60 327.86,356.60 329.16,357.61 330.46,359.12 332.20,357.86 333.06,357.61 334.36,358.61 335.23,358.11 336.96,355.70 338.52,355.70 340.00,358.61 341.30,356.60 342.60,357.86 343.90,357.61 345.20,358.11 346.50,357.36 347.80,357.86 349.10,356.60 350.40,357.86 352.13,358.11 353.86,357.86 355.59,358.61 357.33,358.87 358.63,357.86 359.93,358.11 361.66,357.61 362.96,357.86 364.69,357.11 365.99,356.60 366.86,357.86 367.90,356.35 369.03,358.36 371.19,358.11 372.93,357.86 374.23,357.86 375.35,356.35 376.56,358.36 378.56,358.11 379.86,357.11 381.59,357.61 383.32,357.86 385.49,357.36 386.00,357.51 387.73,358.77 389.47,358.52 391.20,358.27 392.93,357.76 394.23,356.76 395.53,357.01 397.27,357.26 399.00,357.26 400.73,358.02 402.46,357.76 404.20,358.77 406.36,357.76 408.36,356.26 410.26,358.77 412.00,358.27 413.73,357.51 414.90,355.00 415.90,341.10 416.60,344.80 417.40,343.60 418.60,357.20 420.66,358.52 422.40,357.51 424.13,357.26 425.86,357.01 427.16,358.02 428.89,358.02 430.63,357.26 432.79,357.51 434.53,357.76 436.26,357.76 437.99,358.27 439.73,358.02 441.03,357.76 442.15,355.70 443.19,358.77 444.93,358.52 446.66,357.26 448.39,357.26 450.12,358.27 450.90,355.50 451.90,343.30 452.70,347.50 453.40,346.60 454.40,357.00 455.32,356.76 456.62,357.76 457.84,357.26 458.00,358.26 459.83,357.46 461.20,357.19 462.57,358.52 464.40,358.26 466.23,357.46 468.06,356.93 469.44,355.70 470.81,357.73 472.64,358.26 473.55,357.73 475.38,358.52 477.21,358.26 479.04,357.73 480.87,358.79 483.16,357.46 485.60,354.80 487.30,352.90 488.80,357.30 490.94,358.52 493.22,358.26 494.14,358.26 495.05,356.13 495.97,358.26 497.80,358.26 499.17,356.40 500.09,356.13 501.00,358.26 503.29,356.66 504.66,357.46 506.03,358.26 507.41,357.73 509.24,357.99 511.06,358.26 512.89,358.52 514.72,357.99 516.55,358.79 518.38,357.73 520.21,357.46 522.50,356.66 523.87,358.26 525.70,358.52 527.99,357.19 529.82,358.26 531.50,357.73" fill="none" stroke="#8da75c" stroke-width="0.8" stroke-linejoin="round" stroke-linecap="butt" opacity="0.85"/>
<polyline points="317.00,349.06 317.90,350.80 318.77,351.23 319.63,355.13 320.93,356.00 322.23,356.86 323.53,355.13 324.57,352.96 325.70,355.56 327.00,353.40 327.86,353.40 329.16,355.13 330.46,357.73 332.20,355.56 333.06,355.13 334.36,356.86 335.23,356.00 336.96,349.50 338.52,346.46 340.00,356.86 341.30,353.40 342.60,355.56 343.90,355.13 345.20,356.00 346.50,354.70 347.80,355.56 349.10,353.40 350.40,355.56 352.13,356.00 353.86,355.56 355.59,356.86 357.33,357.30 358.63,355.56 359.93,356.00 361.66,355.13 362.96,355.56 364.69,354.26 365.99,353.40 366.86,355.56 367.90,352.96 369.03,356.43 371.19,356.00 372.93,355.56 374.23,355.56 375.35,352.96 376.56,356.43 378.56,356.00 379.86,354.26 381.59,355.13 383.32,355.56 385.49,354.70 386.00,354.96 387.73,357.13 389.47,356.70 391.20,356.26 392.93,355.40 394.23,353.66 395.53,354.10 397.27,354.53 399.00,354.53 400.73,355.83 402.46,355.40 404.20,357.13 406.36,355.40 408.36,352.80 410.26,357.13 412.00,356.26 413.73,354.96 414.68,352.80 415.90,286.25 417.20,352.80 418.93,356.26 420.66,356.70 422.40,354.96 424.13,354.53 425.86,354.10 427.16,355.83 428.89,355.83 430.63,354.53 432.79,354.96 434.53,355.40 436.26,355.40 437.99,356.26 439.73,355.83 441.03,355.40 442.15,351.50 443.19,357.13 444.93,356.70 446.66,354.53 448.39,354.53 450.12,356.26 450.64,353.66 451.68,293.53 452.81,353.23 454.46,355.40 455.32,353.66 456.62,355.40 457.84,354.53 458.00,356.25 459.83,354.87 461.20,354.42 462.57,356.70 464.40,356.25 466.23,354.87 468.06,353.96 469.44,350.30 470.81,355.33 472.64,356.25 473.55,355.33 475.38,356.70 477.21,356.25 479.04,355.33 480.87,357.16 483.16,354.87 485.45,352.59 486.55,351.67 487.28,337.03 488.01,351.67 489.11,356.25 490.94,356.70 493.22,356.25 494.14,356.25 495.05,352.59 495.97,356.25 497.80,356.25 499.17,353.04 500.09,352.59 501.00,356.25 503.29,353.50 504.66,354.87 506.03,356.25 507.41,355.33 509.24,355.79 511.06,356.25 512.89,356.70 514.72,355.79 516.55,357.16 518.38,355.33 520.21,354.87 522.50,353.50 523.87,356.25 525.70,356.70 527.99,354.42 529.82,356.25 531.50,355.33" fill="none" stroke="#d07634" stroke-width="0.85" stroke-linejoin="round" stroke-linecap="butt" opacity="1.0"/>
<polyline points="317.00,362.70 467.30,362.70" fill="none" stroke="#a6413a" stroke-width="1.2" stroke-linejoin="round" stroke-linecap="butt" opacity="1.0"/>
<polyline points="466.20,357.20 467.60,362.70 531.50,362.70" fill="none" stroke="#2d6899" stroke-width="1.25" stroke-linejoin="round" stroke-linecap="butt" opacity="1.0"/>
<text transform="translate(312.60,287.60) rotate(0.03) scale(0.95,1)" font-size="7.7" text-anchor="end" fill="#d2d3d4" font-weight="400" stroke="#d2d3d4" stroke-width="0.18">300 ms</text>
<text transform="translate(312.60,313.53) rotate(0.03) scale(0.95,1)" font-size="7.7" text-anchor="end" fill="#d2d3d4" font-weight="400" stroke="#d2d3d4" stroke-width="0.18">200 ms</text>
<text transform="translate(312.60,339.47) rotate(0.03) scale(0.95,1)" font-size="7.7" text-anchor="end" fill="#d2d3d4" font-weight="400" stroke="#d2d3d4" stroke-width="0.18">100 ms</text>
<text transform="translate(312.60,365.40) rotate(0.03) scale(0.95,1)" font-size="7.7" text-anchor="end" fill="#d2d3d4" font-weight="400" stroke="#d2d3d4" stroke-width="0.18">0 ns</text>
<text transform="translate(359.60,374.60) rotate(0.03) scale(0.95,1)" font-size="7.7" text-anchor="middle" fill="#d2d3d4" font-weight="400" stroke="#d2d3d4" stroke-width="0.18">12:00</text>
<text transform="translate(430.90,374.60) rotate(0.03) scale(0.95,1)" font-size="7.7" text-anchor="middle" fill="#d2d3d4" font-weight="400" stroke="#d2d3d4" stroke-width="0.18">14:00</text>
<text transform="translate(502.60,374.60) rotate(0.03) scale(0.95,1)" font-size="7.7" text-anchor="middle" fill="#d2d3d4" font-weight="400" stroke="#d2d3d4" stroke-width="0.18">16:00</text>
<clipPath id="lc"><rect x="282.4" y="380" width="264.3" height="51.8"/></clipPath>
<g clip-path="url(#lc)">
<rect x="294.10" y="388.00" width="8.2" height="2.1" rx="0.7" fill="#7eb26d"/>
<text transform="translate(305.30,391.95) rotate(0.03) scale(0.9102,1)" font-size="8.1" text-anchor="start" fill="#d3d4d6" font-weight="400" stroke="#d3d4d6" stroke-width="0.22">avg end of minor GC (G1 Evacuation Pause)</text>
<rect x="294.10" y="401.30" width="8.2" height="2.1" rx="0.7" fill="#eab839"/>
<text transform="translate(305.30,405.25) rotate(0.03) scale(0.9293,1)" font-size="8.1" text-anchor="start" fill="#d3d4d6" font-weight="400" stroke="#d3d4d6" stroke-width="0.22">avg end of minor GC (G1 Humongous Allocation)</text>
<rect x="294.10" y="414.50" width="8.2" height="2.1" rx="0.7" fill="#6ed0e0"/>
<text transform="translate(305.30,418.45) rotate(0.03) scale(0.9099,1)" font-size="8.1" text-anchor="start" fill="#d3d4d6" font-weight="400" stroke="#d3d4d6" stroke-width="0.22">avg end of minor GC (GCLocker Initiated GC)</text>
<rect x="294.10" y="427.70" width="8.2" height="2.1" rx="0.7" fill="#ef843c"/>
<text transform="translate(305.30,431.65) rotate(0.03) scale(0.9124,1)" font-size="8.1" text-anchor="start" fill="#d3d4d6" font-weight="400" stroke="#d3d4d6" stroke-width="0.22">max end of minor GC (G1 Evacuation Pause)</text>
</g>
<rect x="555.60" y="254.10" width="264.3" height="182.5" rx="1.6" fill="#212226"/>
<path d="M815.00,434.60 H818.00 V431.60" fill="none" stroke="#5a5b5f" stroke-width="1.5"/>
<text transform="translate(687.75,266.75) rotate(0.03) scale(0.9577,1)" font-size="9.5" text-anchor="middle" fill="#d8d9da" font-weight="400" stroke="#d8d9da" stroke-width="0.45">Allocated/Promoted</text>
<polygon points="590.60,340.88 591.98,348.35 594.47,333.41 596.47,333.41 597.46,339.88 599.95,340.38 601.45,347.85 603.64,318.96 605.93,354.82 607.92,333.41 609.41,346.85 610.91,339.88 611.90,333.41 613.40,347.35 614.89,347.35 617.38,333.41 620.07,347.85 621.37,333.41 622.86,333.90 624.85,347.85 626.84,347.85 628.84,340.88 629.83,347.35 630.83,340.88 632.32,346.85 633.32,333.41 634.31,339.88 634.81,333.90 637.30,347.85 639.29,325.94 640.79,339.88 642.28,318.47 643.28,318.96 645.27,354.32 647.76,325.94 648.76,325.44 649.75,318.96 651.75,347.35 653.44,326.43 654.24,326.93 657.22,354.32 656.00,349.15 657.81,353.67 660.89,319.83 662.88,327.43 664.69,347.34 666.86,334.67 667.76,341.00 669.57,326.53 671.38,341.00 673.19,327.43 674.64,340.10 675.91,341.00 678.62,354.58 682.24,341.00 684.05,341.00 686.22,326.53 688.57,347.34 690.38,335.57 691.29,341.91 693.10,335.57 694.00,341.91 695.81,335.57 697.62,342.81 699.43,342.81 700.34,350.05 702.15,335.57 703.41,327.43 704.86,342.81 708.48,304.27 709.75,311.14 711.56,288.52 713.00,296.67 714.81,327.43 715.72,334.67 716.62,311.14 718.43,327.43 719.34,341.91 720.60,320.19 722.05,327.43 723.86,358.19 726.58,308.43 728.39,331.05 730.19,322.91 729.81,323.82 731.98,340.11 734.88,298.12 736.69,315.67 738.50,331.06 740.67,331.96 743.75,306.62 746.10,338.30 747.00,331.96 749.18,348.25 750.99,315.67 753.34,339.20 755.15,323.82 756.42,307.17 757.86,315.67 759.67,331.96 762.39,315.67 763.29,315.67 765.65,340.11 768.36,306.62 770.53,316.58 771.98,331.06 773.25,323.82 774.70,331.96 776.51,348.25 780.13,315.13 781.94,331.42 784.11,331.06 785.56,315.13 786.82,322.91 789.54,323.82 790.99,340.11 792.25,331.96 794.06,331.96 794.97,339.20 797.68,315.13 800.04,348.25 801.85,315.13 803.66,331.42 804.90,322.91 804.90,398.80 590.60,398.80" fill="#2b3029" opacity="1.0"/>
<line x1="590.60" x2="804.90" y1="284.90" y2="284.90" stroke="#fff" stroke-opacity="0.125" stroke-width="0.8"/>
<line x1="590.60" x2="804.90" y1="307.68" y2="307.68" stroke="#fff" stroke-opacity="0.125" stroke-width="0.8"/>
<line x1="590.60" x2="804.90" y1="330.46" y2="330.46" stroke="#fff" stroke-opacity="0.125" stroke-width="0.8"/>
<line x1="590.60" x2="804.90" y1="353.24" y2="353.24" stroke="#fff" stroke-opacity="0.125" stroke-width="0.8"/>
<line x1="590.60" x2="804.90" y1="376.02" y2="376.02" stroke="#fff" stroke-opacity="0.125" stroke-width="0.8"/>
<line x1="590.60" x2="804.90" y1="398.80" y2="398.80" stroke="#fff" stroke-opacity="0.125" stroke-width="0.8"/>
<line x1="633.40" x2="633.40" y1="284.90" y2="398.80" stroke="#fff" stroke-opacity="0.155" stroke-width="0.8"/>
<line x1="704.50" x2="704.50" y1="284.90" y2="398.80" stroke="#fff" stroke-opacity="0.155" stroke-width="0.8"/>
<line x1="776.50" x2="776.50" y1="284.90" y2="398.80" stroke="#fff" stroke-opacity="0.155" stroke-width="0.8"/>
<polyline points="590.60,340.88 591.98,348.35 594.47,333.41 596.47,333.41 597.46,339.88 599.95,340.38 601.45,347.85 603.64,318.96 605.93,354.82 607.92,333.41 609.41,346.85 610.91,339.88 611.90,333.41 613.40,347.35 614.89,347.35 617.38,333.41 620.07,347.85 621.37,333.41 622.86,333.90 624.85,347.85 626.84,347.85 628.84,340.88 629.83,347.35 630.83,340.88 632.32,346.85 633.32,333.41 634.31,339.88 634.81,333.90 637.30,347.85 639.29,325.94 640.79,339.88 642.28,318.47 643.28,318.96 645.27,354.32 647.76,325.94 648.76,325.44 649.75,318.96 651.75,347.35 653.44,326.43 654.24,326.93 657.22,354.32 656.00,349.15 657.81,353.67 660.89,319.83 662.88,327.43 664.69,347.34 666.86,334.67 667.76,341.00 669.57,326.53 671.38,341.00 673.19,327.43 674.64,340.10 675.91,341.00 678.62,354.58 682.24,341.00 684.05,341.00 686.22,326.53 688.57,347.34 690.38,335.57 691.29,341.91 693.10,335.57 694.00,341.91 695.81,335.57 697.62,342.81 699.43,342.81 700.34,350.05 702.15,335.57 703.41,327.43 704.86,342.81 708.48,304.27 709.75,311.14 711.56,288.52 713.00,296.67 714.81,327.43 715.72,334.67 716.62,311.14 718.43,327.43 719.34,341.91 720.60,320.19 722.05,327.43 723.86,358.19 726.58,308.43 728.39,331.05 730.19,322.91 729.81,323.82 731.98,340.11 734.88,298.12 736.69,315.67 738.50,331.06 740.67,331.96 743.75,306.62 746.10,338.30 747.00,331.96 749.18,348.25 750.99,315.67 753.34,339.20 755.15,323.82 756.42,307.17 757.86,315.67 759.67,331.96 762.39,315.67 763.29,315.67 765.65,340.11 768.36,306.62 770.53,316.58 771.98,331.06 773.25,323.82 774.70,331.96 776.51,348.25 780.13,315.13 781.94,331.42 784.11,331.06 785.56,315.13 786.82,322.91 789.54,323.82 790.99,340.11 792.25,331.96 794.06,331.96 794.97,339.20 797.68,315.13 800.04,348.25 801.85,315.13 803.66,331.42 804.90,322.91" fill="none" stroke="#72a163" stroke-width="0.9" stroke-linejoin="round" stroke-linecap="butt" opacity="1.0"/>
<polyline points="590.60,398.60 688.20,398.60 688.90,395.40 691.10,395.40 691.90,398.60 724.10,398.60 724.90,393.50 727.00,393.50 727.80,398.60 804.90,398.60" fill="none" stroke="#bc962d" stroke-width="1.2" stroke-linejoin="round" stroke-linecap="butt" opacity="1.0"/>
<text transform="translate(586.40,287.60) rotate(0.03) scale(0.95,1)" font-size="7.7" text-anchor="end" fill="#d2d3d4" font-weight="400" stroke="#d2d3d4" stroke-width="0.18">25 MBs</text>
<text transform="translate(586.40,310.38) rotate(0.03) scale(0.95,1)" font-size="7.7" text-anchor="end" fill="#d2d3d4" font-weight="400" stroke="#d2d3d4" stroke-width="0.18">20 MBs</text>
<text transform="translate(586.40,333.16) rotate(0.03) scale(0.95,1)" font-size="7.7" text-anchor="end" fill="#d2d3d4" font-weight="400" stroke="#d2d3d4" stroke-width="0.18">15 MBs</text>
<text transform="translate(586.40,355.94) rotate(0.03) scale(0.95,1)" font-size="7.7" text-anchor="end" fill="#d2d3d4" font-weight="400" stroke="#d2d3d4" stroke-width="0.18">10 MBs</text>
<text transform="translate(586.40,378.72) rotate(0.03) scale(0.95,1)" font-size="7.7" text-anchor="end" fill="#d2d3d4" font-weight="400" stroke="#d2d3d4" stroke-width="0.18">5 MBs</text>
<text transform="translate(586.40,401.50) rotate(0.03) scale(0.95,1)" font-size="7.7" text-anchor="end" fill="#d2d3d4" font-weight="400" stroke="#d2d3d4" stroke-width="0.18">0 Bs</text>
<text transform="translate(633.50,411.00) rotate(0.03) scale(0.95,1)" font-size="7.7" text-anchor="middle" fill="#d2d3d4" font-weight="400" stroke="#d2d3d4" stroke-width="0.18">12:00</text>
<text transform="translate(704.60,411.00) rotate(0.03) scale(0.95,1)" font-size="7.7" text-anchor="middle" fill="#d2d3d4" font-weight="400" stroke="#d2d3d4" stroke-width="0.18">14:00</text>
<text transform="translate(776.60,411.00) rotate(0.03) scale(0.95,1)" font-size="7.7" text-anchor="middle" fill="#d2d3d4" font-weight="400" stroke="#d2d3d4" stroke-width="0.18">16:00</text>
<rect x="567.60" y="424.20" width="8.2" height="2.1" rx="0.7" fill="#7eb26d"/>
<text transform="translate(578.60,428.15) rotate(0.03) scale(0.9406,1)" font-size="8.1" text-anchor="start" fill="#d3d4d6" font-weight="400" stroke="#d3d4d6" stroke-width="0.22">allocated</text>
<rect x="616.40" y="424.20" width="8.2" height="2.1" rx="0.7" fill="#eab839"/>
<text transform="translate(627.00,428.15) rotate(0.03) scale(0.9439,1)" font-size="8.1" text-anchor="start" fill="#d3d4d6" font-weight="400" stroke="#d3d4d6" stroke-width="0.22">promoted</text>
<rect x="-4" y="439.45" width="839" height="1.55" fill="#000"/>
<rect x="-4" y="441.0" width="839" height="5" fill="#f4f4f4"/>
</svg>
</body></html>
